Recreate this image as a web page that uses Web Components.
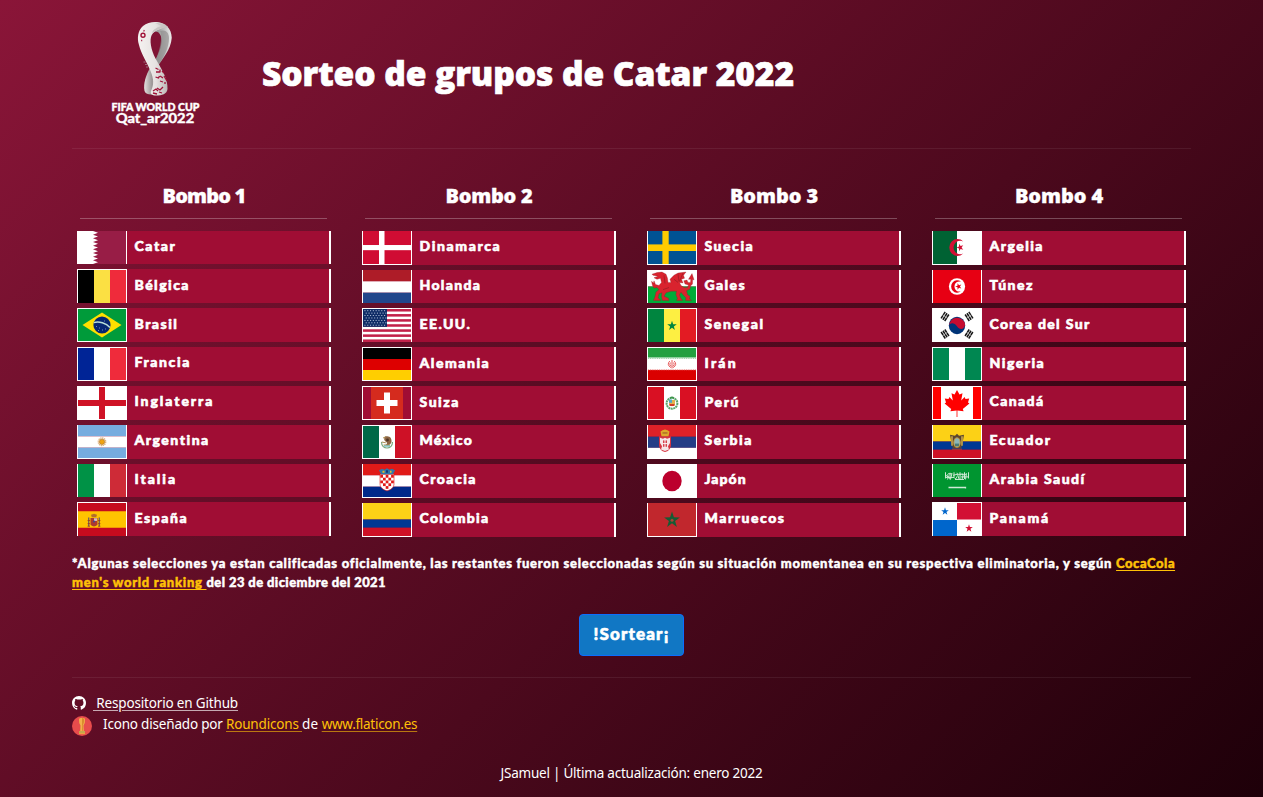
<!DOCTYPE html>
<html lang="es">
<head>
<meta charset="utf-8">
<title>Sorteo de grupos de Catar 2022</title>
<style>
html,body{margin:0;height:797px;overflow:hidden}
body{font-family:"Noto Sans","Open Sans",sans-serif;color:#fff;background:linear-gradient(135deg,#8a1538 0%,#1e0009 100%)}
</style>
</head>
<body>
<draw-app></draw-app>
<script>
const star = (cx, cy, r, fill, rot = -90) => {
  let p = [];
  for (let i = 0; i < 10; i++) {
    const a = (rot + i * 36) * Math.PI / 180, q = i % 2 ? r * .39 : r;
    p.push((cx + q * Math.cos(a)).toFixed(2) + ',' + (cy + q * Math.sin(a)).toFixed(2));
  }
  return `<polygon points="${p.join(' ')}" fill="${fill}"/>`;
};
const R = (x, y, w, h, f) => `<rect x="${x}" y="${y}" width="${w}" height="${h}" fill="${f}"/>`;
const V = (a, b, c) => R(0, 0, 16, 32, a) + R(16, 0, 16, 32, b) + R(32, 0, 16, 32, c);
const H = (a, b, c) => R(0, 0, 48, 11, a) + R(0, 11, 48, 11, b) + R(0, 22, 48, 10, c);
const zig = () => { let d = 'M0,0H15'; for (let i = 0; i < 9; i++) d += `L20,${(i + .5) * 3.556}L15,${(i + 1) * 3.556}`; return d + 'V32H0Z'; };
const usa = () => {
  let s = R(0, 0, 48, 32, '#fff');
  for (let i = 0; i < 7; i++) s += R(0, i * 4.92, 48, 2.46, '#c2214a');
  s += R(0, 0, 24, 17.3, '#0f2c66');
  for (let y = 0; y < 7; y++) for (let x = 0; x < 8; x++) s += R(1.4 + x * 2.8 + (y % 2) * 1.3, 1.2 + y * 2.35, 1.1, .9, '#b9c6dd');
  return s;
};
const croatia = () => {
  let s = H('#e01a18', '#fff', '#00298a') + '<path d="M17,10h14v9c0,4-3,6-7,7c-4-1-7-3-7-7z" fill="#fff" stroke="#e01a18" stroke-width=".6"/>';
  for (let y = 0; y < 5; y++) for (let x = 0; x < 5; x++) if ((x + y) % 2 == 0 && !(y == 4 && (x == 0 || x == 4))) s += R(17.3 + x * 2.7, 10.6 + y * 2.7, 2.7, 2.7, '#e01a18');
  return s + '<path d="M16,6l3,-1.5l2.5,1l2.5,-1.5l2.5,1.5l2.5,-1l3,1.5l-2,4h-12z" fill="#2f78a8"/><path d="M19.5,6.5h2v2h-2zM27,6.5h1.5v2h-1.5z" fill="#e6b92a"/><path d="M23,6h2v2.5h-2z" fill="#173b79"/>';
};
const bars = (cx, cy, rot) => `<g transform="translate(${cx},${cy}) rotate(${rot})" fill="#151515"><rect x="-3.7" y="-3" width="7.4" height="1.5"/><rect x="-3.7" y="-.8" width="7.4" height="1.5"/><rect x="-3.7" y="1.4" width="7.4" height="1.5"/><rect x="-.4" y="-3.2" width=".8" height="6.4" fill="#fff" opacity=".55"/></g>`;
const FLAGS = {
  qa: R(0, 0, 48, 32, '#981d46') + `<path d="${zig()}" fill="#fff"/>`,
  be: V('#000', '#fbe043', '#ef2b3b'),
  br: R(0, 0, 48, 32, '#009b3a') + '<path d="M24,3.5L43.5,16L24,28.5L4.5,16Z" fill="#fedf00"/><circle cx="24" cy="16" r="8.6" fill="#062672"/><path d="M15.8,13.6C21,12 28,14 32,18.6" fill="none" stroke="#b8ded8" stroke-width="1.5"/><path d="M18 17.5h1M21 19h1M24 21h1M27 20h1M20 21.5h1M26 12h1" stroke="#8ea4cf" stroke-width=".8"/>',
  fr: V('#002496', '#fff', '#ef2b3b'),
  en: R(0, 0, 48, 32, '#fff') + R(21, 0, 6, 32, '#cf1226') + R(0, 13, 48, 6, '#cf1226'),
  ar: H('#76acdf', '#fff', '#76acdf') + '<circle cx="24" cy="16.3" r="3.7" fill="none" stroke="#dfb07c" stroke-width="1.4" stroke-dasharray="1.3 .6"/><circle cx="24" cy="16.3" r="2.6" fill="#f0a312" stroke="#b07a30" stroke-width=".7"/>',
  it: V('#009246', '#fff', '#ce2b37'),
  es: R(0, 0, 48, 32, '#c60b1e') + R(0, 8, 48, 16, '#ffc400') + '<path d="M12.5,14.5h7v6.5q-3.5,3.5-7,0z" fill="#ad3a31"/><path d="M13,11.5l3-1l3,1l-.8,2.4h-4.4z" fill="#b36d2c"/><path d="M10.7,14v8.5M21.3,14v8.5" stroke="#776558" stroke-width="1.4"/><path d="M9.6,20h2.4M9.6,17h2.4M20,20h2.4M20,17h2.4M9.6,22.5h2.4M20,22.5h2.4" stroke="#a3331f" stroke-width=".8"/><path d="M16,14.8h3v2.6h-3z" fill="#d6bfc4"/><circle cx="16" cy="18" r="1" fill="#334b9b"/>',
  dk: R(0, 0, 48, 32, '#d00c33') + R(16, 0, 5.5, 32, '#fff') + R(0, 13.6, 48, 5, '#fff'),
  nl: H('#ae1c28', '#fff', '#21468b'),
  us: usa(),
  de: H('#000', '#d00', '#ffce00'),
  ch: R(8, 0, 32, 32, '#d52b1e') + R(21, 5.5, 6, 21, '#fff') + R(13.5, 13, 21, 6, '#fff'),
  mx: V('#006847', '#fff', '#ce1126') + '<path d="M18.5,16c0,8 11,8 11,0" fill="none" stroke="#7aa77c" stroke-width="1.2"/><path d="M22,10.5c5-1.5 7,2 6.5,5.5c-1,3-3,3.5-6,3c2-1 2-2.5 0-3.5c-1.5-1-1.8-3-.5-5z" fill="#8c6544"/><path d="M20,12l3-1.2M18.8,16l4,.8M20.5,19h6.5" stroke="#a98c50"/><circle cx="24.5" cy="14" r="1.4" fill="#4e3423"/><path d="M21,20h6" stroke="#52b1b3" stroke-width="1.1"/>',
  hr: croatia(),
  co: R(0, 0, 48, 16, '#fcd116') + R(0, 16, 48, 8, '#003893') + R(0, 24, 48, 8, '#ce1126'),
  se: R(0, 0, 48, 32, '#005293') + R(14.4, 0, 6.3, 32, '#fecb00') + R(0, 13, 48, 6.4, '#fecb00'),
  wa: R(0, 0, 48, 16, '#fff') + R(0, 16, 48, 16, '#00ab39') + '<g fill="#d9232e" stroke="#8c1c22" stroke-width=".3" stroke-linejoin="round"><path d="M4,4L9,2.500L14,2L18,4L19.500,8L20,12L23,12L22,9L26,5L30,3L38,2L35.500,5L36.500,8L33.500,9L35,12.500L31.500,12L33,15L36,17L39.500,17L40.500,14.500L37,13.500L35.800,10.500L39,9.800L40,12L42.500,12L42.800,9L40.500,9L44,3.500L46,9.500L44.600,9.300L44.500,13.500L42.500,15.500L42,18.500L38.500,20L39.500,24L42,25.500L41.500,28L43.500,29.500L37.500,29.500L38,27L35.500,24.500L33,21.500L31.500,24L32.500,27L34.500,29.500L28.500,29.500L29.500,27.500L28,24L28.500,20.500L23,20.500L18,22L16,25.500L20.500,27.500L21,29.500L14.500,29.500L13.500,26L14,22L11,23L10,27L13,29.500L5.500,29.500L7,26L8,21.500L11,19L9,17L6,17.500L4.500,15L3.500,11L5.500,12.500L6,10.500L7.500,14L11,15L13.500,12L12.500,8L9,9L6,7.500L10,6L5,5Z"/></g><path d="M26,9L30,12M30,4L31,11M35,3L31.500,11M16,5L17,13M15,19L21,17" stroke="#8c1c22" stroke-width=".6" fill="none"/>',
  sn: V('#00853f', '#fdef42', '#e31b23') + star(24, 16.3, 5, '#00853f'),
  ir: R(0, 0, 48, 32, '#fff') + R(0, 0, 48, 9.5, '#239f40') + R(0, 22, 48, 10, '#da0000') + '<path d="M0,10.3H48" stroke="#8ccb99" stroke-dasharray="1.2 .6"/><path d="M0,21.7H48" stroke="#f3a0a0" stroke-dasharray="1.2 .6"/><path d="M24,12v8.5M21.8,13q-3.5,3.5,1,6.7M26.2,13q3.5,3.5-1,6.7M22.3,14.5q-1.2,2,.6,4M25.7,14.5q1.2,2-.6,4" fill="none" stroke="#e34b4b" stroke-width=".9"/>',
  pe: V('#d91023', '#fff', '#d91023') + '<circle cx="24" cy="16.3" r="5.4" fill="none" stroke="#5ba56b" stroke-width="2" stroke-dasharray="2 .5"/><path d="M21,13h6v4.5q-3,3.5-6,0z" fill="#e2b24c"/><path d="M21,12.5h3v3.3h-3z" fill="#50a6c9"/><path d="M21.5,17h5v2h-5z" fill="#d03b26"/><path d="M22,11.5q2-2.5 4,0" stroke="#3c944c" stroke-width="1.3" fill="none"/>',
  rs: R(0, 0, 48, 11, '#de2128') + R(0, 11, 48, 10.5, '#243d86') + R(0, 21.5, 48, 10.5, '#fff') + '<path d="M11,10.5h12v9q-1,5-6,6q-5-1-6-6z" fill="#d53440"/><path d="M17,12l2,1l3-1v5l-2,3l1,3l-4,1.5l-4-1.5l1-3l-2-3v-5l3,1z" fill="#f5e6e8"/><path d="M15,14.5h4v6h-4z" fill="#d5404b"/><path d="M17,14v7M14.8,17.5h4.4" stroke="#fff" stroke-width=".9"/><path d="M12.5,6l2-1l2.5-.8l2.5,.8l2,1l-1,4.500h-7z" fill="#ddaa2c"/><path d="M14.5,7.5h5" stroke="#9b5526" stroke-width="1"/>',
  jp: R(0, 0, 48, 32, '#fff') + '<circle cx="24" cy="16" r="9.7" fill="#bc002d"/>',
  ma: R(0, 0, 48, 32, '#c1272d') + star(24, 16.5, 8.3, '#165b34') + '<circle cx="24" cy="16.7" r="1.5" fill="#a64435"/>',
  dz: R(0, 0, 24, 32, '#006233') + R(24, 0, 24, 32, '#fff') + '<path d="M30.3,10.2A8.2,8.2 0 1 0 30.3,21.8A6.6,6.6 0 1 1 30.3,10.2Z" fill="#d21034"/>' + star(27.2, 16, 3.7, '#d21034', 180),
  tn: R(0, 0, 48, 32, '#e70013') + '<circle cx="24" cy="16" r="8.1" fill="#fff"/><path d="M28,11.4A6,6 0 1 0 28,20.6A4.9,4.9 0 1 1 28,11.4Z" fill="#e70013"/>' + star(25.6, 16, 3.4, '#e70013', 180),
  kr: R(0, 0, 48, 32, '#fff') + '<circle cx="24" cy="16.4" r="8.2" fill="#003478"/><path d="M15.900,17A8.200,8.200 0 0 1 32.100,15.500C31.500,20.500 26.500,21 24,17.200C21.500,13.500 16.500,13.500 15.900,17Z" fill="#c60c30"/>' + bars(12, 8, -56) + bars(36, 8, 56) + bars(12, 24.5, 56) + bars(36, 24.5, -56),
  ng: V('#008751', '#fff', '#008751'),
  ca: R(0, 0, 48, 32, '#fff') + R(0, 0, 8, 32, '#f00') + R(40, 0, 8, 32, '#f00') + '<path d="M24,3l2.5,4.6l3-1.4l-1.3,7.3l3.4-3.6l.9,2.2l3.7-.7l-1.2,4l1.4,1l-6.6,5.5l.8,2.3l-6.200-.8V30h-.8V23.400l-6.200,.8l.8-2.300l-6.600-5.500l1.400-1l-1.200-4l3.700,.7l.9-2.200l3.400,3.600l-1.300-7.300l3,1.400z" fill="#f00"/>',
  ec: R(0, 0, 48, 16, '#fcd116') + R(0, 16, 48, 8, '#003893') + R(0, 24, 48, 8, '#ce1126') + '<path d="M17,9.5l5,1l2-2l2,2l5-1l-1.3,7l-1.5,6h-8.4l-1.5-6z" fill="#5a4630"/><path d="M19,11v9M29,11v9" stroke="#d9b24a" stroke-width="1.4"/><ellipse cx="24" cy="17" rx="3.2" ry="4.6" fill="#8db6b8" stroke="#c79837"/><path d="M22,18h4v2.5h-4z" fill="#477a78"/><path d="M19,23.5h10" stroke="#a33b33" stroke-width="1.2"/>',
  sa: R(0, 0, 48, 32, '#009530') + '<path d="M12.5,8v6M14.5,10q2,3 0,5M17,8.500v6.500M19,9l-1.500,6M21,8v5q2,3 3-1M24,8.500l2,6M27,8v7M29,9q2,2 0,6M31.500,8v6.500M33.500,9l-1,6M35.500,8v6M13,13h8M22,15h9M15,9.500h4M25,10h8M13,11l4,3M20,11l4,-1M28,12.500h7" fill="none" stroke="#d3ebd9" stroke-width=".95"/><path d="M15.500,22.800H32.500v.900" fill="none" stroke="#cfead6" stroke-width="1.300"/>',
  pa: R(0, 0, 48, 32, '#fff') + R(24, 0, 24, 16, '#d21034') + R(0, 16.500, 24, 15.500, '#0066cc') + star(12, 8.200, 4, '#0066cc') + star(36, 24.600, 4, '#d21034')
};
/* name, title width, row heights, rows whose label sits one pixel lower, teams */
const POTS = [
  ['Bombo 1', 83, '33px 34px 34px 34px 34px 34px 33px 34px', [1, 2, 7], [['Catar','qa','',41],['Bélgica','be','t',54.7],['Brasil','br','tb',43],['Francia','fr','tb',55.7],['Inglaterra','en','tb',79],['Argentina','ar','b',74.7],['Italia','it','',41.7],['España','es','t',53]]],
  ['Bombo 2', 87, '34px 33px 34px 34px 34px 34px 34px 34px', [2, 3, 4], [['Dinamarca','dk','b',81],['Holanda','nl','',61],['EE.UU.','us','t',51],['Alemania','de','tb',70],['Suiza','ch','tb',39.7],['México','mx','tb',52.7],['Croacia','hr','b',56.7],['Colombia','co','b',69.3]]],
  ['Bombo 3', 88, '34px 33px 34px 34px 34px 34px 34px 34px', [2, 3, 4], [['Suecia','se','b',49],['Gales','wa','',40.7],['Senegal','sn','t',59.3],['Irán','ir','tb',32.7],['Perú','pe','tb',34.7],['Serbia','rs','',47.7],['Japón','jp','',41.3],['Marruecos','ma','b',80.3]]],
  ['Bombo 4', 88, '34px 33px 34px 34px 34px 34px 33px 34px', [2, 3, 7], [['Argelia','dz','b',53.7],['Túnez','tn','',43.7],['Corea del Sur','kr','',100.3],['Nigeria','ng','tb',55],['Canadá','ca','tb',54.3],['Ecuador','ec','b',61.3],['Arabia Saudí','sa','',95.3],['Panamá','pa','t',59.7]]]
];

/* A run of text whose tracking is set so that it takes the given width. */
customElements.define('text-run', class extends HTMLElement {
  connectedCallback() {
    if (this.shadowRoot) return;
    this.attachShadow({ mode: 'open' }).innerHTML = `<style>:host{display:inline-block;white-space:pre}:host([link]){color:#ffc107}span{display:inline-block;-webkit-text-stroke:var(--heavy,0) currentColor}:host([link]) span,:host([line]) span{text-decoration:underline;text-decoration-thickness:1px;text-underline-offset:2px;text-decoration-color:var(--line,currentColor)}</style><span></span>`;
    const s = this.shadowRoot.querySelector('span'), t = this.getAttribute('t');
    s.textContent = t;
    const w = +this.getAttribute('w');
    s.style.letterSpacing = ((w - s.getBoundingClientRect().width) / [...t].length).toFixed(3) + 'px';
  }
});

customElements.define('team-flag', class extends HTMLElement {
  connectedCallback() {
    const e = this.getAttribute('edges') || '';
    this.attachShadow({ mode: 'open' }).innerHTML = `<style>:host{display:block;box-sizing:border-box;width:50px;height:100%;border:0 solid #fff;border-width:${e.includes('t') ? 1 : 0}px 1px ${e.includes('b') ? 1 : 0}px}svg{display:block;width:48px;height:100%}</style><svg viewBox="0 0 48 32" preserveAspectRatio="none">${FLAGS[this.getAttribute('code')]}</svg>`;
  }
});

customElements.define('team-row', class extends HTMLElement {
  connectedCallback() {
    this.attachShadow({ mode: 'open' }).innerHTML = `<style>:host{display:flex;box-sizing:border-box;background:#a00d34;border-right:2px solid #fff;overflow:hidden;font-family:Lato,"Noto Sans",sans-serif;font-weight:900;font-size:14px;line-height:30px;--heavy:.6px}.n{padding-left:7.5px}:host([low]) .n{padding-top:1px}</style><team-flag code="${this.getAttribute('code')}" edges="${this.getAttribute('edges')}"></team-flag><div class="n"><slot></slot></div>`;
  }
});

customElements.define('team-pot', class extends HTMLElement {
  connectedCallback() {
    const [name, w, rows, low, teams] = POTS[+this.getAttribute('index')];
    this.attachShadow({ mode: 'open' }).innerHTML = `<style>:host{display:block;width:254px}h2{margin:0;height:35px;line-height:26px;font-size:20px;font-family:"Open Sans","Noto Sans",sans-serif;font-weight:800;text-align:center;--heavy:.3px}hr{margin:0 4px 12px 3px;border:0;height:1px;background:rgba(255,255,255,.27)}.rows{display:grid;gap:5px;grid-template-rows:${rows}}</style><h2><text-run t="${name}" w="${w}"></text-run></h2><hr><div class="rows">${teams.map((t, i) => `<team-row code="${t[1]}" edges="${t[2]}"${low.includes(i) ? ' low' : ''}><text-run t="${t[0]}" w="${t[3] + .8}"></text-run></team-row>`).join('')}</div>`;
  }
});

customElements.define('cup-logo', class extends HTMLElement {
  connectedCallback() {
    this.attachShadow({ mode: 'open' }).innerHTML = `<style>:host{display:block;width:92px;height:110px}svg{display:block}</style>
<svg width="92" height="110" viewBox="110 20 92 110"><defs>
<linearGradient id="g" x1="0" x2="1"><stop offset="0" stop-color="#777"/><stop offset=".5" stop-color="#aaa"/><stop offset="1" stop-color="#eee"/></linearGradient>
<linearGradient id="w" x1="0" x2="1"><stop offset="0" stop-color="#f5f2f1"/><stop offset=".6" stop-color="#e6e2e1"/><stop offset="1" stop-color="#bbb5b4"/></linearGradient>
<linearGradient id="l" x1="0" x2="1"><stop offset="0" stop-color="#e4e0df"/><stop offset=".5" stop-color="#9b9696"/><stop offset="1" stop-color="#d2cecd"/></linearGradient></defs>
<path d="M150,24C162,19 172,27 171.700,38C171,50 162,59 156,69L152,66C156,59 161,50 161.500,42C162,34 158,30 152,32Z" fill="url(#g)"/>
<path d="M160,31C163,36 160,52 154,63L157,67C164,57 169,48 169,38C169,32 165,29 160,31Z" fill="#8e8b8b" opacity=".65"/>
<path d="M150,68C146,75 143,84 144.500,91C146,95 151,95 155,94L160,82L154,69Z" fill="url(#l)"/>
<path d="M168,27C163,21 150,20 143,26C138,30 136.800,38 139,45C141,54 147,62 150.500,71C154,79 154,85 151,91C150,94 152,95.500 156,95.500C162,95.500 167,94 167.500,89C168,79 162,70 157.500,62C152,53 149.500,43 151,37C152.500,31 159,29 168,27Z" fill="url(#w)"/>
<path d="M155,23C160,23 164,25 168,27C162,27 157,30 152,33C153,29 158,27 162,26Z" fill="#c9c5c4"/>
<g fill="none" stroke="#a01238"><circle cx="143" cy="35.300" r="2" stroke-width="1.400"/><path d="M141.200,40.500h1M143.500,30.500l1,.5" stroke-width="1.400"/><path d="M155.500,68l3,1.500M156,72l4,0M160,69.500v3M162,71l2,2M155.500,77l3,1l1-2M160,76l3,2M164,76l3,5M160,81l3,1M165,82v2M153,91l3-2l2,2M157,88l3,2l3-3M153,93l4,1M159,92l3,1" stroke-width="1.300"/><path d="M143.500,62h2M145,64.500h2M146,67h2" stroke="#a98891" stroke-width=".8"/></g>
<g fill="#fff" stroke="#fff" stroke-width=".4" font-family="Lato,Noto Sans,sans-serif"><text x="111.500" y="111" font-size="10.500" font-weight="900" textLength="88" lengthAdjust="spacingAndGlyphs">FIFA WORLD CUP</text><text x="115.700" y="123" font-size="12.500" font-weight="700" textLength="78.500" lengthAdjust="spacingAndGlyphs">Qat_ar2022</text></g></svg>`;
  }
});

customElements.define('draw-header', class extends HTMLElement {
  connectedCallback() {
    this.attachShadow({ mode: 'open' }).innerHTML = `<style>:host{display:flex;box-sizing:border-box;height:149px;margin:0 72px;padding:20px 0 0 38px;border-bottom:1px solid rgba(255,255,255,.07)}h1{margin:28px 0 0 60px;font-family:"Open Sans","Noto Sans",sans-serif;font-size:33.5px;line-height:50px;font-weight:800;--heavy:.7px}</style><cup-logo></cup-logo><h1><text-run t="Sorteo de grupos de Catar 2022" w="532"></text-run></h1>`;
  }
});

customElements.define('draw-footer', class extends HTMLElement {
  connectedCallback() {
    this.attachShadow({ mode: 'open' }).innerHTML = `<style>:host{display:block;margin:21px 72px 0;padding-top:15px;border-top:1px solid rgba(255,255,255,.07);font-size:13.5px;line-height:21px}.r{display:flex;height:21px}.gh{width:14px;height:14px;margin:3px 7px 0 0;display:block}.cup{display:block;width:20px;height:20px;margin:2px 11px 0 0}.r{--line:rgba(255,255,255,.65)}.r+.r{--line:rgba(255,193,7,.6)}p{margin:28px 0 0;text-align:center;line-height:21px}</style>
<div class="r"><svg class="gh" viewBox="0 0 16 16"><path fill="#fff" d="M8 0C3.580 0 0 3.580 0 8c0 3.540 2.290 6.530 5.470 7.590.4.070.55-.17.55-.38 0-.19-.01-.82-.01-1.490-2.010.37-2.530-.49-2.690-.94-.09-.23-.48-.94-.82-1.130-.28-.15-.68-.52-.01-.53.63-.01 1.080.58 1.230.82.720 1.210 1.870.87 2.330.66.070-.52.280-.87.510-1.070-1.780-.2-3.640-.89-3.640-3.950 0-.87.310-1.590.820-2.150-.08-.2-.36-1.020.080-2.120 0 0 .670-.21 2.200.820.640-.18 1.320-.27 2-.27s1.360.09 2 .27c1.530-1.040 2.200-.82 2.200-.82.440 1.100.160 1.920.080 2.120.510.560.820 1.270.820 2.150 0 3.070-1.870 3.750-3.650 3.950.290.250.540.730.540 1.480 0 1.070-.01 1.930-.01 2.200 0 .210.150.460.550.380A8.010 8.010 0 0 0 16 8c0-4.420-3.580-8-8-8z"/></svg><text-run line t=" Respositorio en Github" w="145"></text-run></div>
<div class="r"><svg class="cup" viewBox="0 0 20 20"><circle cx="10" cy="10" r="10" fill="#e84c4c"/><path d="M7,3.500q0-1.800 3-1.800t3,1.800q.3,3.500-1.500,6l.3,6h-3.600l.3-6q-1.800-2.500-1.500-6z" fill="#f2b04b"/><path d="M10,2q2,0 2.200,1.800q0,3-1.400,5.500l.2,5.500h-1z" fill="#d98b2e"/><path d="M7,15h6v3.200h-6z" fill="#e8a243"/><path d="M7,16h6" stroke="#8fae5b" stroke-width=".8"/></svg><text-run t="Icono diseñado por " w="123"></text-run><text-run link t="Roundicons " w="76"></text-run><text-run t="de " w="19.700"></text-run><text-run link t="www.flaticon.es" w="95.500"></text-run></div>
<p><text-run t="JSamuel | Última actualización: enero 2022" w="262"></text-run></p>`;
  }
});

customElements.define('draw-app', class extends HTMLElement {
  connectedCallback() {
    this.attachShadow({ mode: 'open' }).innerHTML = `<style>:host{display:block;width:1263px;height:797px;overflow:hidden}.pots{display:flex;gap:31px;margin:34px 0 0 77px;height:354px}.note{margin:17px 72px 0;font-family:Lato,"Noto Sans",sans-serif;font-size:13px;line-height:19px;font-weight:900;height:38px;--heavy:.45px}.note div{display:flex}.act{display:flex;justify-content:center;margin-top:22px}button{box-sizing:border-box;width:105px;height:42px;margin:0;padding:0 0 4px;border:1px solid #0d6efd;border-radius:4px;background:#1177c4;color:#fff;font:900 17px Lato,"Noto Sans",sans-serif;--heavy:.6px}</style>
<draw-header></draw-header>
<div class="pots">${[0, 1, 2, 3].map(i => `<team-pot index="${i}"></team-pot>`).join('')}</div>
<div class="note"><div><text-run t="*Algunas selecciones ya estan calificadas oficialmente, las restantes fueron seleccionadas según su situación momentanea en su respectiva eliminatoria, y según " w="1044"></text-run><text-run link t="CocaCola" w="59"></text-run></div><div><text-run link t="men's world ranking " w="134.500"></text-run><text-run t="del 23 de diciembre del 2021" w="179.500"></text-run></div></div>
<div class="act"><button><text-run t="!Sortear¡" w="76"></text-run></button></div>
<draw-footer></draw-footer>`;
  }
});
</script>
</body>
</html>
